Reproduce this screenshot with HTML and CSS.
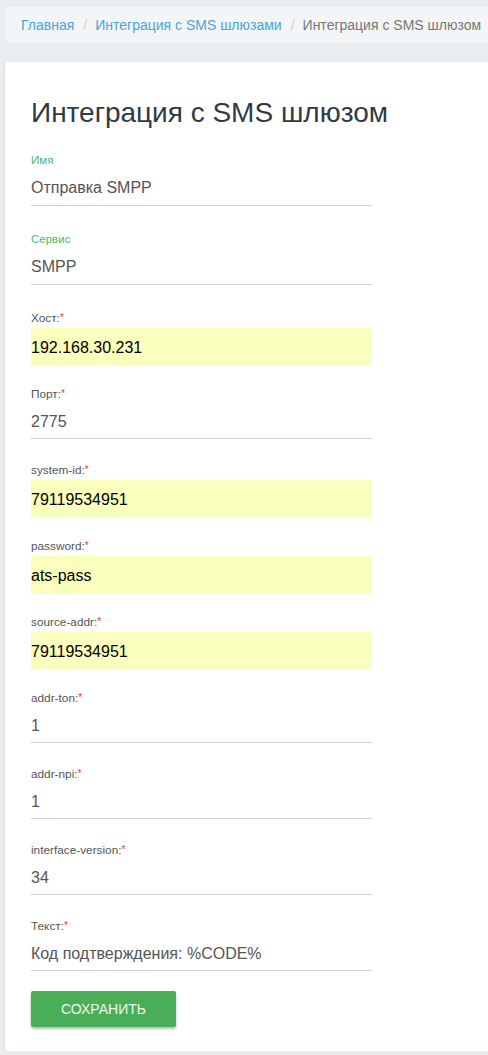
FILE: index.html
```html
<!DOCTYPE html>
<html lang="ru">
<head>
<meta charset="utf-8">
<title>Интеграция с SMS шлюзом</title>
<link rel="stylesheet" href="styles.css">
</head>
<body>
<div class="page">
  <nav class="breadcrumb">
    <a class="crumb-link" href="#">Главная</a>
    <span class="sep">/</span>
    <a class="crumb-link" href="#">Интеграция с SMS шлюзами</a>
    <span class="sep">/</span>
    <span class="crumb-current">Интеграция с SMS шлюзом</span>
  </nav>

  <main class="card">
    <h1 class="title">Интеграция с SMS шлюзом</h1>
    <form class="form">
      <div class="field field--primary">
        <label class="label label--green">Имя</label>
        <input class="input input--plain input--primary" type="text" value="Отправка SMPP">
      </div>
      <div class="field field--primary">
        <label class="label label--green">Сервис</label>
        <input class="input input--plain input--primary" type="text" value="SMPP">
      </div>
      <div class="field">
        <label class="label">Хост:<span class="req">*</span></label>
        <input class="input input--filled" type="text" value="192.168.30.231">
      </div>
      <div class="field">
        <label class="label">Порт:<span class="req">*</span></label>
        <input class="input input--plain" type="text" value="2775">
      </div>
      <div class="field">
        <label class="label">system-id:<span class="req">*</span></label>
        <input class="input input--filled" type="text" value="79119534951">
      </div>
      <div class="field">
        <label class="label">password:<span class="req">*</span></label>
        <input class="input input--filled" type="text" value="ats-pass">
      </div>
      <div class="field">
        <label class="label">source-addr:<span class="req">*</span></label>
        <input class="input input--filled" type="text" value="79119534951">
      </div>
      <div class="field">
        <label class="label">addr-ton:<span class="req">*</span></label>
        <input class="input input--plain" type="text" value="1">
      </div>
      <div class="field">
        <label class="label">addr-npi:<span class="req">*</span></label>
        <input class="input input--plain" type="text" value="1">
      </div>
      <div class="field">
        <label class="label">interface-version:<span class="req">*</span></label>
        <input class="input input--plain" type="text" value="34">
      </div>
      <div class="field field--last">
        <label class="label">Текст:<span class="req">*</span></label>
        <input class="input input--plain" type="text" value="Код подтверждения: %CODE%">
      </div>
      <button class="btn-save" type="button">СОХРАНИТЬ</button>
    </form>
  </main>
</div>
</body>
</html>
```
FILE: styles.css
```css
* { box-sizing: border-box; }

html, body {
  margin: 0;
  padding: 0;
  background: #eaedf0;
  font-family: "Liberation Sans", Arial, sans-serif;
}

.page {
  padding: 7px 0 0 5px;
  overflow: hidden;
}

.breadcrumb {
  display: flex;
  align-items: center;
  height: 35px;
  padding: 0 0 0 16px;
  margin-right: -4px;
  background: #f4f5f6;
  border-radius: 4px;
  font-size: 14px;
  white-space: nowrap;
}

.crumb-link {
  color: #45a7d9;
  text-decoration: none;
}

.sep {
  color: #cfcfcf;
  padding: 0 8px 0 9px;
}

.crumb-current {
  color: #777;
}

.card {
  margin-top: 20px;
  margin-right: -4px;
  background: #fff;
  border-radius: 3px;
  box-shadow: 0 1px 3px rgba(0, 0, 0, 0.14);
  padding: 34px 0 24px 26px;
}

.title {
  margin: 0 0 24px;
  font-size: 28px;
  line-height: 33px;
  font-weight: 400;
  color: #2f3a44;
}

.form {
  width: 341px;
  display: flex;
  flex-direction: column;
}

.field {
  display: flex;
  flex-direction: column;
  margin-bottom: 21px;
}

.field--primary { margin-bottom: 26px; }
.field--last { margin-bottom: 17px; }

.label {
  display: block;
  height: 14px;
  font-size: 11.8px;
  line-height: 14px;
  color: #555;
  margin-bottom: 3px;
}

.label--green {
  color: #4cb86a;
  font-size: 11.5px;
}

.req {
  position: relative;
  top: -1px;
  color: #e03a3a;
  font-size: 10px;
  line-height: 0;
}

.input {
  display: block;
  width: 100%;
  border: none;
  outline: none;
  margin: 0;
  padding: 0;
  font-family: "Liberation Sans", Arial, sans-serif;
  font-size: 16px;
}

.input--plain {
  height: 35px;
  margin-bottom: 3px;
  background: transparent;
  color: #555;
  border-bottom: 1px solid #d0d0d0;
  padding-top: 1px;
}

.input--primary {
  height: 36px;
  margin-bottom: 0;
}

.input--filled {
  height: 38px;
  background: #faffbd;
  color: #000;
  padding-top: 1px;
}

.btn-save {
  align-self: flex-start;
  width: 145px;
  height: 36px;
  border: none;
  border-radius: 2px;
  background: #4aae58;
  color: #eef7ee;
  font-family: "Liberation Sans", Arial, sans-serif;
  font-size: 14px;
  box-shadow: 0 2px 3px rgba(0, 0, 0, 0.28);
  cursor: pointer;
}
```
